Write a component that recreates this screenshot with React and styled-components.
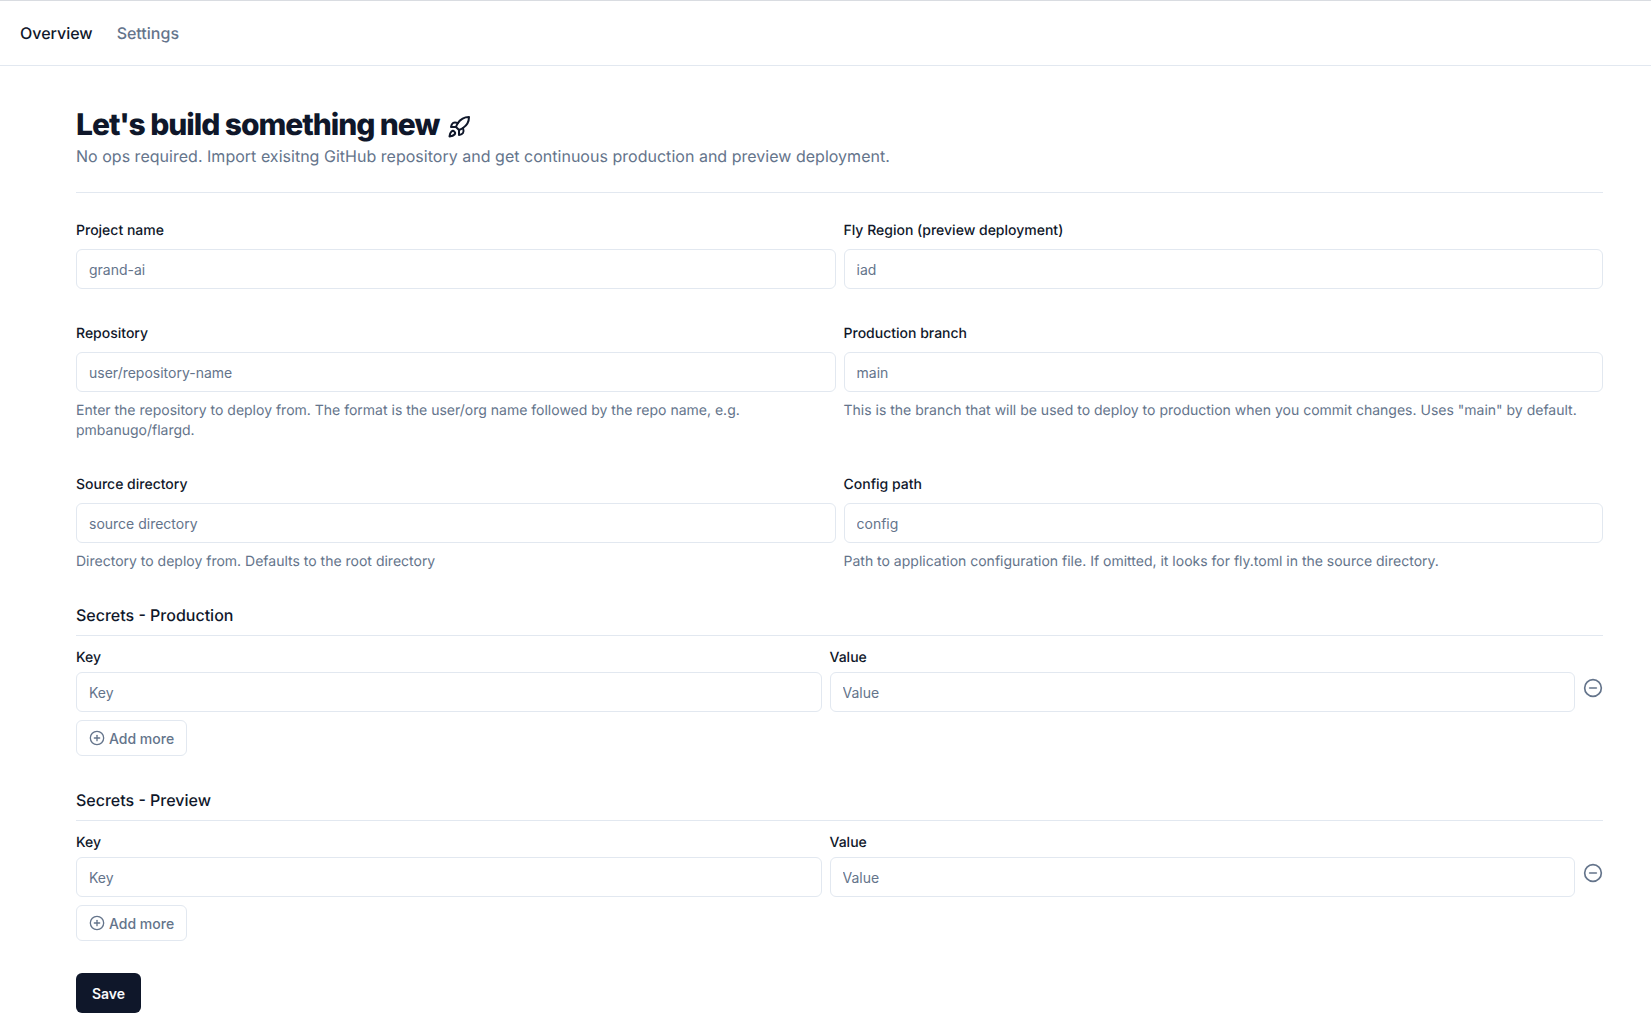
import React from 'react'
import styled, { createGlobalStyle } from 'styled-components'
import { Rocket, CirclePlus, CircleMinus } from 'lucide-react'

const Global = createGlobalStyle`
  * { box-sizing: border-box; }
  html, body { margin: 0; background: #fff; }
  body {
    font-family: Inter, "Liberation Sans", sans-serif;
    color: #0f172a;
    text-rendering: geometricPrecision;
  }
`

const Nav = styled.nav`
  display: flex;
  align-items: center;
  gap: 24px;
  height: 66px;
  padding: 0 20px;
  border-top: 1px solid #d9dce1;
  border-bottom: 1px solid #e2e8f0;
`
const Tab = styled.a`
  font-size: 16px;
  font-weight: 500;
  line-height: 24px;
  color: ${p => (p.$active ? '#0f172a' : '#64748b')};
`
const Main = styled.main`
  padding: 41px 48px 20px 76px;
`
const Title = styled.h1`
  display: flex;
  align-items: center;
  gap: 8px;
  margin: 0;
  font-size: 30px;
  line-height: 36px;
  font-weight: 800;
  letter-spacing: -1.05px;
`
const TitleIcon = styled(Rocket)`
  margin-top: 3px;
`
const Subtitle = styled.p`
  margin: 1px 0 0;
  font-size: 16px;
  line-height: 24px;
  letter-spacing: 0.02px;
  color: #64748b;
`
const Divider = styled.div`
  height: 1px;
  background: #e2e8f0;
  margin-top: ${p => p.$top}px;
`
const FormGrid = styled.div`
  display: grid;
  grid-template-columns: 1fr 1fr;
  column-gap: 8px;
  margin-top: 28px;
`
const Field = styled.div`
  display: flex;
  flex-direction: column;
  padding-bottom: ${p => p.$bottom}px;
`
const Label = styled.label`
  font-size: 14px;
  font-weight: 500;
  line-height: 20px;
  margin-bottom: ${p => p.$gap}px;
`
const Input = styled.input`
  width: 100%;
  height: 40px;
  padding: 0 12px;
  border: 1px solid #e2e8f0;
  border-radius: 6px;
  background: #fff;
  font-family: inherit;
  font-size: 14px;
  color: #0f172a;
  outline: none;
  &::placeholder { color: #64748b; opacity: 1; }
`
const Help = styled.p`
  margin: 9px 0 0;
  font-size: 14px;
  line-height: 20px;
  color: #64748b;
`
const SectionTitle = styled.h2`
  margin: 0;
  font-size: 16px;
  font-weight: 500;
  line-height: 24px;
`
const SecretsSection = styled.section`
  margin-top: ${p => p.$top}px;
`
const SecretRow = styled.div`
  display: grid;
  grid-template-columns: 1fr 1fr 20px;
  column-gap: 8px;
  margin-top: 12px;
`
const RemoveButton = styled.button`
  display: flex;
  justify-content: flex-end;
  align-self: start;
  margin-top: 30px;
  padding: 0;
  border: 0;
  background: none;
  color: #64748b;
`
const AddButton = styled.button`
  display: flex;
  align-items: center;
  gap: 4px;
  width: fit-content;
  height: 36px;
  margin-top: 8px;
  padding: 0 12px;
  border: 1px solid #e2e8f0;
  border-radius: 6px;
  background: #fff;
  font-family: inherit;
  font-size: 14px;
  font-weight: 500;
  color: #64748b;
`
const SaveButton = styled.button`
  display: block;
  width: 65px;
  height: 40px;
  margin-top: 32px;
  border: 0;
  border-radius: 6px;
  background: #0f172a;
  color: #f8fafc;
  font-family: inherit;
  font-size: 14px;
  font-weight: 600;
`

const fields = [
  { label: 'Project name', placeholder: 'grand-ai', bottom: 35 },
  { label: 'Fly Region (preview deployment)', placeholder: 'iad', bottom: 35 },
  {
    label: 'Repository',
    placeholder: 'user/repository-name',
    help: 'Enter the repository to deploy from. The format is the user/org name followed by the repo name, e.g. pmbanugo/flargd.',
    bottom: 34,
  },
  {
    label: 'Production branch',
    placeholder: 'main',
    help: 'This is the branch that will be used to deploy to production when you commit changes. Uses "main" by default.',
    bottom: 34,
  },
  {
    label: 'Source directory',
    placeholder: 'source directory',
    help: 'Directory to deploy from. Defaults to the root directory',
    bottom: 0,
  },
  {
    label: 'Config path',
    placeholder: 'config',
    help: 'Path to application configuration file. If omitted, it looks for fly.toml in the source directory.',
    bottom: 0,
  },
]

const Secrets = ({ title, top }) => (
  <SecretsSection $top={top}>
    <SectionTitle>{title}</SectionTitle>
    <Divider $top={8} />
    <SecretRow>
      <Field>
        <Label $gap={4}>Key</Label>
        <Input placeholder="Key" />
      </Field>
      <Field>
        <Label $gap={4}>Value</Label>
        <Input placeholder="Value" />
      </Field>
      <RemoveButton>
        <CircleMinus size={20} strokeWidth={2} />
      </RemoveButton>
    </SecretRow>
    <AddButton>
      <CirclePlus size={16} strokeWidth={2} />
      Add more
    </AddButton>
  </SecretsSection>
)

export default function App() {
  return (
    <>
      <Global />
      <Nav>
        <Tab $active>Overview</Tab>
        <Tab>Settings</Tab>
      </Nav>
      <Main>
        <Title>
          Let's build something new
          <TitleIcon size={24} strokeWidth={2} />
        </Title>
        <Subtitle>
          No ops required. Import exisitng GitHub repository and get continuous production and preview deployment.
        </Subtitle>
        <Divider $top={24} />
        <FormGrid>
          {fields.map(f => (
            <Field key={f.label} $bottom={f.bottom}>
              <Label $gap={8}>{f.label}</Label>
              <Input placeholder={f.placeholder} />
              {f.help && <Help>{f.help}</Help>}
            </Field>
          ))}
        </FormGrid>
        <Secrets title="Secrets - Production" top={31} />
        <Secrets title="Secrets - Preview" top={32} />
        <SaveButton>Save</SaveButton>
      </Main>
    </>
  )
}
